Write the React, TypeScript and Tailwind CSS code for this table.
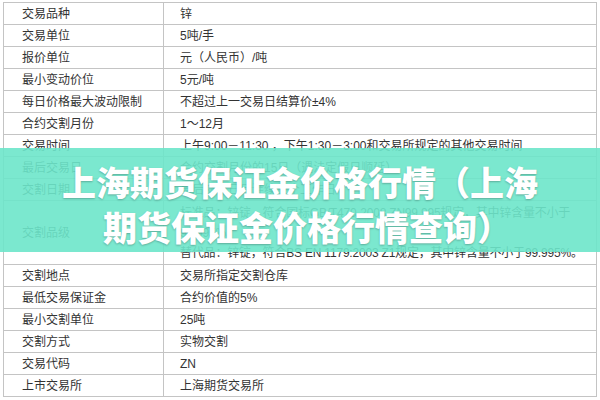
const rows: [string, string][] = [
  ['交易品种', '锌'],
  ['交易单位', '5吨/手'],
  ['报价单位', '元（人民币）/吨'],
  ['最小变动价位', '5元/吨'],
  ['每日价格最大波动限制', '不超过上一交易日结算价±4%'],
  ['合约交割月份', '1～12月'],
  ['交易时间', '上午9:00－11:30 ，下午1:30－3:00和交易所规定的其他交易时间'],
  ['最后交易日', '合约交割月份的15日（遇法定假日顺延）'],
  ['交割日期', '最后交易日后连续五个工作日'],
];

const rowsAfter: [string, string][] = [
  ['交割地点', '交易所指定交割仓库'],
  ['最低交易保证金', '合约价值的5%'],
  ['最小交割单位', '25吨'],
  ['交割方式', '实物交割'],
  ['交易代码', 'ZN'],
  ['上市交易所', '上海期货交易所'],
];

function Row({ label, value }: { label: string; value: string }) {
  return (
    <div className="flex h-[22px] border-b border-[#c4c4c4]">
      <div className="w-[160px] shrink-0 border-r border-[#c4c4c4] pl-[18px] flex items-center">{label}</div>
      <div className="flex-1 pl-[16px] flex items-center whitespace-nowrap">{value}</div>
    </div>
  );
}

export default function App() {
  return (
    <div className="relative w-[600px] h-[400px] bg-white overflow-hidden font-['Liberation_Sans','Noto_Sans_CJK_SC',sans-serif] text-[12px] text-[#333]">
      <div className="pt-[2px] px-[3px]">
        <div className="border-t border-l border-r border-[#c4c4c4]">
          {rows.map(([l, v]) => (
            <Row key={l} label={l} value={v} />
          ))}

          {/* 交割品级 */}
          <div className="flex h-[64px] border-b border-[#c4c4c4]">
            <div className="w-[160px] shrink-0 border-r border-[#c4c4c4] pl-[18px] flex items-center">交割品级</div>
            <div className="flex-1 pl-[16px] pt-[2px] flex flex-col leading-[20px] whitespace-nowrap tracking-[-0.2px]">
              <div>标准品：锌锭，符合国标GB/T470-2008 ZN99.995规定，其中锌含量不小于</div>
              <div>99.995%。</div>
              <div>替代品：锌锭，符合BS EN 1179:2003 Z1规定，其中锌含量不小于99.995%。</div>
            </div>
          </div>

          {rowsAfter.map(([l, v]) => (
            <Row key={l} label={l} value={v} />
          ))}
        </div>
      </div>

      {/* title banner */}
      <div className="absolute left-0 right-0 top-[148px] h-[104px] bg-[#6de5ca]/90 flex flex-col items-center justify-center pt-[8px]">
        <div className="font-['Noto_Sans_CJK_SC',sans-serif] font-black text-white text-[34px] leading-[45px] [text-shadow:0_1px_2px_rgba(0,0,0,0.25)] text-center">
          <div>上海期货保证金价格行情（上海</div>
          <div className="pl-[14px]">期货保证金价格行情查询）</div>
        </div>
      </div>
    </div>
  );
}
